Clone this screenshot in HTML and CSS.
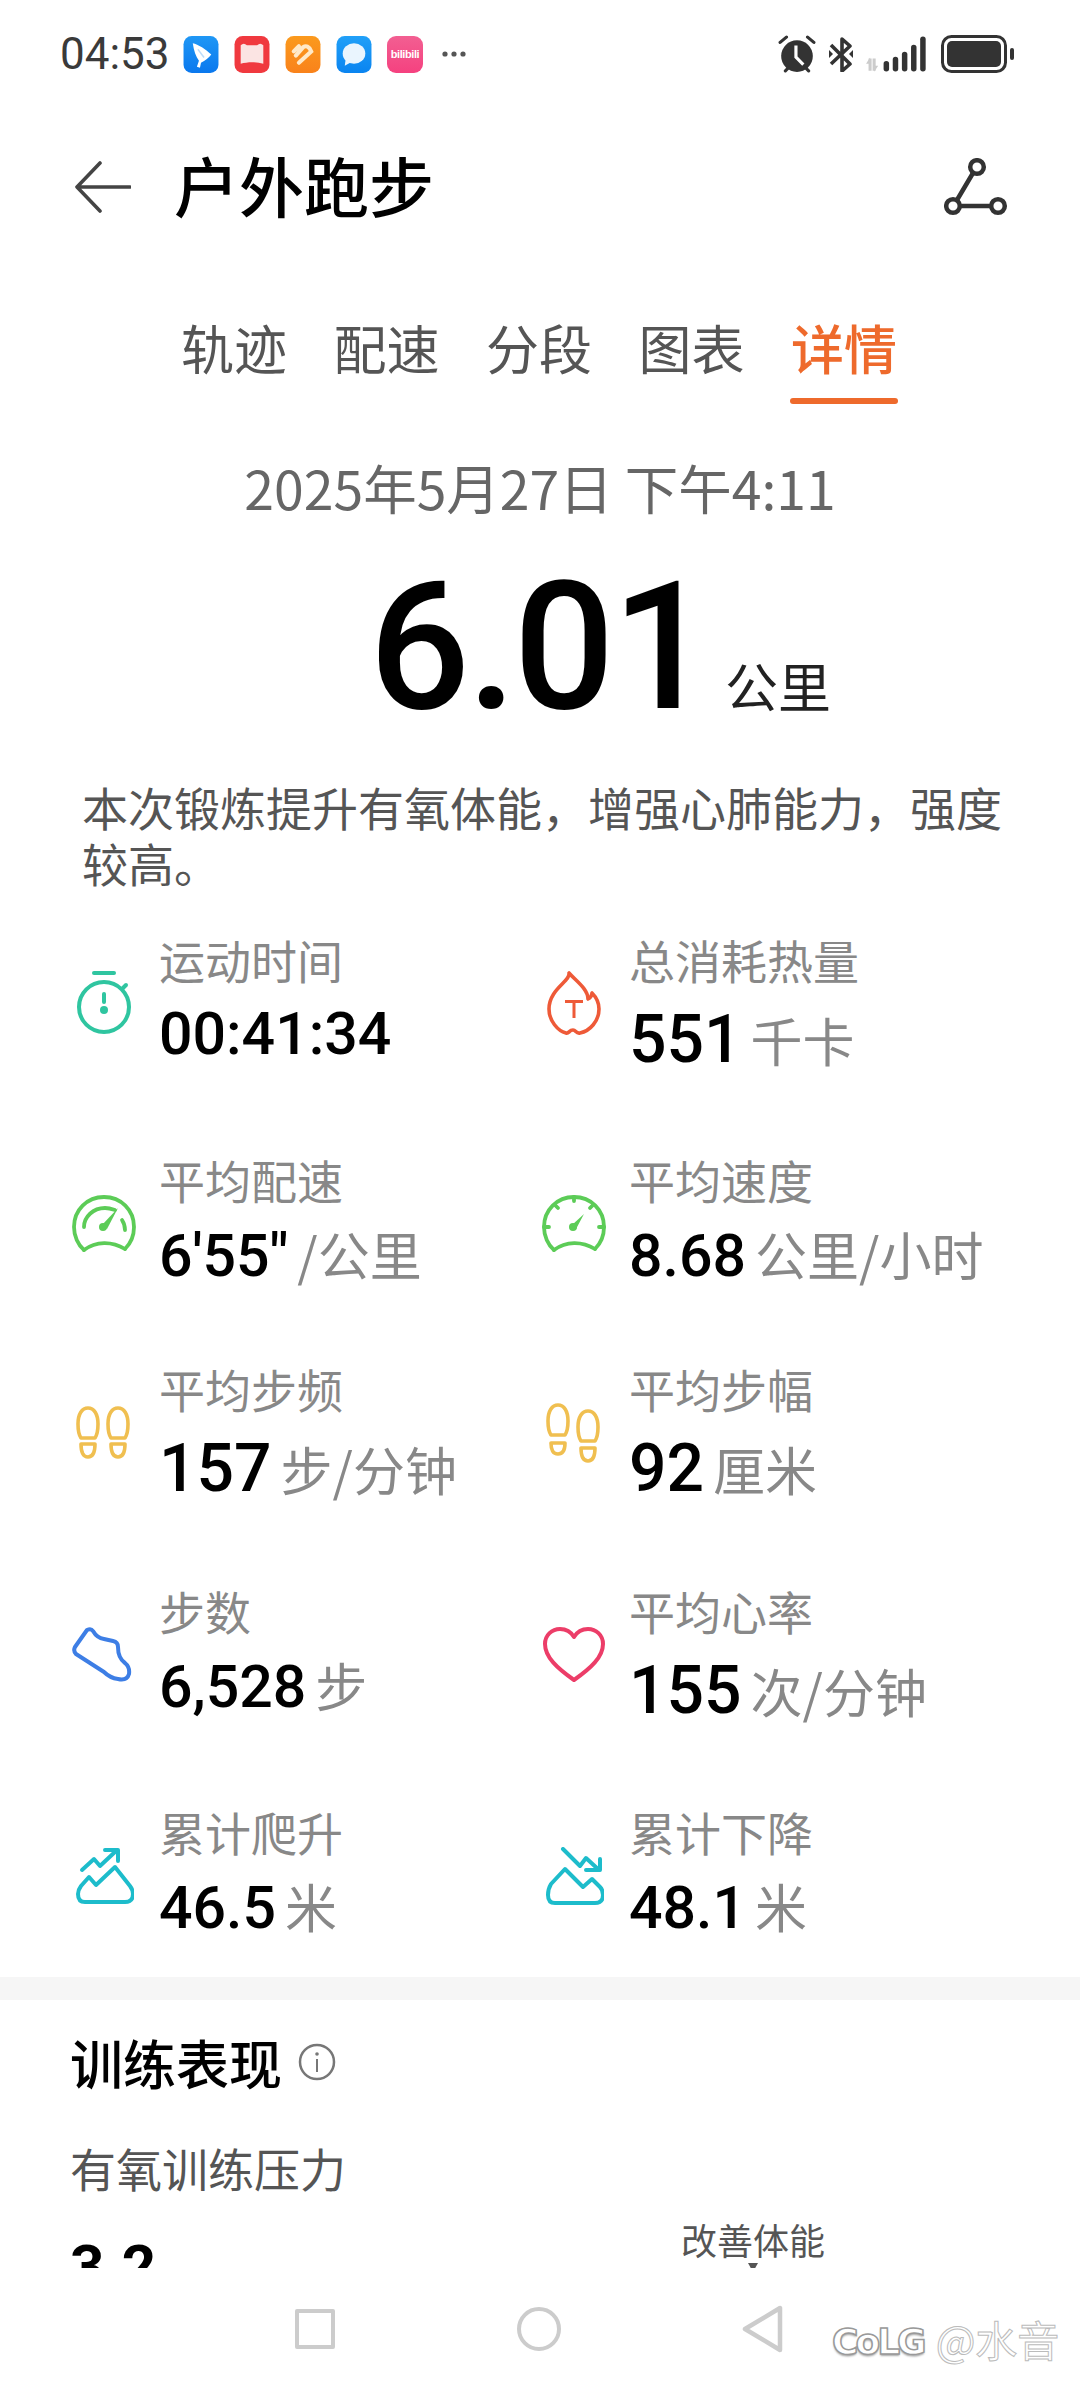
FILE: index.html
```html
<!DOCTYPE html>
<html lang="zh-CN">
<head>
<meta charset="utf-8">
<title>户外跑步</title>
<link rel="stylesheet" href="styles.css">
</head>
<body>
<div class="screen">
  <div class="status">
    <span class="time">04:53</span>
    <div class="apps">
      <svg class="app" viewBox="0 0 34 36"><defs><linearGradient id="g1" x1="0" y1="0" x2="0" y2="1"><stop offset="0" stop-color="#1f97f5"/><stop offset="1" stop-color="#0a78ee"/></linearGradient></defs><rect width="34" height="36" rx="8" fill="url(#g1)"/><path d="M9 7c5 1 13 6 18 11-2 3-6 6-10 8l-1 5-3-1 2-6c-3-4-5-10-6-17z" fill="#fff"/><path d="M14 13l6 8" stroke="#bcdcfa" stroke-width="1.500"/></svg>
      <svg class="app" viewBox="0 0 34 36"><rect width="34" height="36" rx="8" fill="#f0393f"/><path d="M6 9c2-2 4-2 6 0h10c2-2 4-2 6 0v18c-7-2-15-2-22 0z" fill="#fbe4e3"/></svg>
      <svg class="app" viewBox="0 0 34 36"><defs><linearGradient id="g2" x1="0" y1="0" x2="0" y2="1"><stop offset="0" stop-color="#fb9a1d"/><stop offset="1" stop-color="#f9821b"/></linearGradient></defs><rect width="34" height="36" rx="8" fill="url(#g2)"/><path d="M8 15l5-5M13 26l12-11c-2-5-5-6-8-4l-7 8" fill="none" stroke="#ffe9c8" stroke-width="4" stroke-linecap="round"/></svg>
      <svg class="app" viewBox="0 0 34 36"><defs><linearGradient id="g3" x1="0" y1="0" x2="0" y2="1"><stop offset="0" stop-color="#21a0f8"/><stop offset="1" stop-color="#0a84f0"/></linearGradient></defs><rect width="34" height="36" rx="8" fill="url(#g3)"/><ellipse cx="17" cy="17" rx="11" ry="10" fill="#eaf5fe"/><path d="M9 22l-1 7 7-4z" fill="#eaf5fe"/></svg>
      <div class="bili"><span>bilibili</span></div>
    </div>
    <svg class="more" viewBox="0 0 26 8"><circle cx="4" cy="4" r="2.6"/><circle cx="13" cy="4" r="2.6"/><circle cx="22" cy="4" r="2.6"/></svg>
    <div class="sys">
      <svg class="alarm" viewBox="0 0 36 36"><circle cx="18" cy="20" r="15" fill="#333"/><path d="M2 7l6-5M34 7l-6-5M7 34l3-3M29 34l-3-3" stroke="#333" stroke-width="3" stroke-linecap="round" fill="none"/><path d="M17 10v11l7 7" stroke="#fff" stroke-width="3" fill="none"/></svg>
      <svg class="bt" viewBox="0 0 26 36"><path d="M3 9l19 19-8 7V3l8 7-19 18" fill="none" stroke="#333" stroke-width="3.6" stroke-linejoin="round"/><path d="M1 14l4 4-4 4zM25 14l-4 4 4 4z" fill="#333"/></svg>
      <svg class="signal" viewBox="0 0 62 36"><path d="M5 34V22M9 34V22" stroke="#ccc" stroke-width="3" fill="none"/><path d="M1 27l4-6v6zM13 29l-4 6v-6z" fill="#ccc"/><g stroke="#333" stroke-linecap="round" fill="none"><path d="M21 27v5" stroke-width="5.4"/><path d="M30 23v9" stroke-width="5.4"/><path d="M39 18v14" stroke-width="5.4"/><path d="M48 11v21" stroke-width="5.4"/><path d="M57 3v29" stroke-width="5.4"/></g></svg>
      <svg class="battery" viewBox="0 0 74 38"><rect x="1.5" y="1.5" width="63" height="35" rx="9" fill="none" stroke="#333" stroke-width="3"/><rect x="6" y="6" width="54" height="26" rx="5" fill="#333"/><rect x="69" y="13" width="4" height="12" rx="2" fill="#333"/></svg>
    </div>
  </div>

  <header class="head">
    <svg class="back" viewBox="0 0 56 52"><path d="M25 2L2 26l23 24M3 26h52" fill="none" stroke="#444" stroke-width="3.6" stroke-linecap="round" stroke-linejoin="round"/></svg>
    <h1 class="title">户外跑步</h1>
    <svg class="share" viewBox="0 0 64 58"><g fill="none" stroke="#333" stroke-width="4.5"><circle cx="33" cy="9" r="6.8"/><circle cx="9" cy="48" r="6.8"/><circle cx="54" cy="48" r="6.8"/><path d="M29 15L13 42M16 48h31"/></g></svg>
  </header>

  <nav class="tabs">
    <span class="tab">轨迹</span>
    <span class="tab">配速</span>
    <span class="tab">分段</span>
    <span class="tab">图表</span>
    <span class="tab on">详情</span>
  </nav>

  <div class="date">2025年5月27日 下午4:11</div>
  <div class="dist"><span class="dist-n">6.01</span><span class="dist-u">公里</span></div>
  <p class="desc">本次锻炼提升有氧体能，增强心肺能力，强度较高。</p>

  <div class="grid">
    <div class="cell">
      <div class="ic"><svg width="56" height="66" viewBox="0 0 56 66"><g fill="none" stroke="#2fc5a0" stroke-width="4" stroke-linecap="round"><path d="M18 2h20"/><circle cx="28" cy="36" r="25"/><path d="M47 17l3-3"/><path d="M28 23v8"/></g><circle cx="28" cy="39" r="4" fill="#2fc5a0"/></svg></div>
      <div class="tx"><div class="lb">运动时间</div><div class="val"><b>00:41:34</b></div></div>
    </div>
    <div class="cell">
      <div class="ic"><svg width="56" height="66" viewBox="0 0 56 66"><g fill="none" stroke="#ee5a38" stroke-width="3.6" stroke-linejoin="round" stroke-linecap="round"><path d="M23 2c2 8-20 16-20 36 0 12 9 22 17 24 3 1 3-3 7-3 3 0 3 4 7 3 10-2 19-12 19-24 0-8-3-12-7-16 0 4-2 5-4 6 0-10-12-18-19-26z"/></g><path d="M19 29h18v3h-7.5v15h-3V32H19z" fill="#ee5a38"/></svg></div>
      <div class="tx"><div class="lb">总消耗热量</div><div class="val up"><b class="lg">551</b><i>千卡</i></div></div>
    </div>
    <div class="cell">
      <div class="ic shift"><svg width="64" height="58" viewBox="0 0 64 58"><g fill="none" stroke="#5ccc57" stroke-width="3.8" stroke-linecap="round"><path d="M12 55C6 50 2 41 2 32 2 15 15 2 32 2s30 13 30 30c0 8-3 16-9 22"/><path d="M12 55c12-9 28-9 41-1"/><path d="M12 32C12 22 21 13 33 13c4 0 7 1 10 2"/><path d="M50 25c2 3 3 6 3 10"/></g><circle cx="31" cy="32" r="4" fill="#5ccc57"/><path d="M30 30l16-17-11 21z" fill="#5ccc57"/></svg></div>
      <div class="tx"><div class="lb">平均配速</div><div class="val"><b>6'55"</b><i>/公里</i></div></div>
    </div>
    <div class="cell">
      <div class="ic shift"><svg width="64" height="58" viewBox="0 0 64 58"><g fill="none" stroke="#5ccc57" stroke-width="3.8" stroke-linecap="round"><path d="M12 55C6 50 2 41 2 32 2 15 15 2 32 2s30 13 30 30c0 8-3 16-9 22"/><path d="M12 55c12-9 28-9 41-1"/><path d="M32 2v4M13 10l3 3M51 10l-3 3M2 32h5M62 32h-5"/></g><circle cx="31" cy="32" r="4" fill="#5ccc57"/><path d="M30 30l12-11-8 15z" fill="#5ccc57"/></svg></div>
      <div class="tx"><div class="lb">平均速度</div><div class="val"><b>8.68</b><i>公里/小时</i></div></div>
    </div>
    <div class="cell">
      <div class="ic"><svg width="54" height="53" viewBox="0 0 54 53"><g fill="none" stroke="#f0bf50" stroke-width="3.6" stroke-linejoin="round"><path d="M12 2C6 2 2 8 2 18c0 6 1 11 3 14h14c2-3 3-8 3-14C22 8 18 2 12 2z"/><path d="M5 38h14c0 8-2 13-7 13S5 46 5 38z"/><path d="M42 2c-6 0-10 6-10 16 0 6 1 11 3 14h14c2-3 3-8 3-14 0-10-4-16-10-16z"/><path d="M35 38h14c0 8-2 13-7 13s-7-5-7-13z"/></g></svg></div>
      <div class="tx"><div class="lb">平均步频</div><div class="val up"><b class="lg">157</b><i>步/分钟</i></div></div>
    </div>
    <div class="cell">
      <div class="ic"><svg width="54" height="60" viewBox="0 0 54 60"><g fill="none" stroke="#f0bf50" stroke-width="3.6" stroke-linejoin="round"><path d="M12 2C6 2 2 8 2 18c0 6 1 11 3 14h14c2-3 3-8 3-14C22 8 18 2 12 2z"/><path d="M5 40h14c0 7-2 11-7 11S5 47 5 40z"/><path d="M42 8c-6 0-10 6-10 16 0 6 1 11 3 14h14c2-3 3-8 3-14 0-10-4-16-10-16z"/><path d="M35 45h14c0 8-2 13-7 13s-7-5-7-13z"/></g></svg></div>
      <div class="tx"><div class="lb">平均步幅</div><div class="val up"><b class="lg">92</b><i>厘米</i></div></div>
    </div>
    <div class="cell">
      <div class="ic shift"><svg width="60" height="56" viewBox="0 0 60 56"><path d="M3 20L15 3Q19 1 21 4Q25 11 32 12L41 14Q46 15 46 20Q46 31 53 36Q58 40 57 47Q55 54 46 52Q38 51 32 45L4 27Q1 24 3 20z" fill="none" stroke="#3d7ee5" stroke-width="4" stroke-linejoin="round"/></svg></div>
      <div class="tx"><div class="lb">步数</div><div class="val"><b>6,528</b><i>步</i></div></div>
    </div>
    <div class="cell">
      <div class="ic shift"><svg width="64" height="56" viewBox="0 0 64 56"><path d="M32 53C15 41 3 30 3 17 3 8 10 2 18 2c6 0 11 3 14 8 3-5 8-8 14-8 8 0 15 6 15 15 0 13-12 24-29 36z" fill="none" stroke="#ec3d68" stroke-width="4" stroke-linejoin="round"/></svg></div>
      <div class="tx"><div class="lb">平均心率</div><div class="val up"><b class="lg">155</b><i>次/分钟</i></div></div>
    </div>
    <div class="cell">
      <div class="ic"><svg width="58" height="58" viewBox="0 0 58 58"><g fill="none" stroke="#1dbccb" stroke-width="4" stroke-linecap="round" stroke-linejoin="round"><path d="M6 23l12-11 6 7L40 4"/><path d="M29 3h13v11"/><path d="M13 30L20 38 39 20 54 39Q57 43 57 47 57 55 49 55H9Q2 55 2 47 2 43 5 39z"/></g></svg></div>
      <div class="tx"><div class="lb">累计爬升</div><div class="val"><b>46.5</b><i>米</i></div></div>
    </div>
    <div class="cell">
      <div class="ic"><svg width="58" height="58" viewBox="0 0 58 58"><g fill="none" stroke="#1dbccb" stroke-width="4" stroke-linecap="round" stroke-linejoin="round"><path d="M17 2l17 17 6-8 13 12"/><path d="M40 23h14V12"/><path d="M19 22L37 40 46 32 54 40Q57 43 57 48 57 56 49 56H9Q2 56 2 48 2 42 5 37z"/></g></svg></div>
      <div class="tx"><div class="lb">累计下降</div><div class="val"><b>48.1</b><i>米</i></div></div>
    </div>
  </div>

  <div class="band"></div>

  <section class="perf">
    <div class="perf-h"><h2>训练表现</h2><svg class="info" viewBox="0 0 38 38"><circle cx="19" cy="19" r="17" fill="none" stroke="#777" stroke-width="2.5"/><circle cx="19" cy="11" r="1.800" fill="#777"/><path d="M19 16v13" stroke="#777" stroke-width="2"/></svg></div>
    <div class="perf-s">有氧训练压力</div>
    <div class="perf-row">
      <span class="big">3.2</span>
      <div class="hint"><span>改善体能</span><em></em></div>
    </div>
  </section>

  <div class="navbar">
    <span class="nv-sq"></span>
    <span class="nv-ci"></span>
    <svg class="nv-tr" viewBox="0 0 42 48"><path d="M3 24L38 3v42z" fill="none" stroke="#ccc" stroke-width="4.500" stroke-linejoin="round"/></svg>
  </div>

  <div class="mark"><span class="mk-l">CoLG</span><span class="mk-r">@水音</span></div>
</div>
</body>
</html>
```
FILE: styles.css
```css
* { box-sizing: border-box; margin: 0; padding: 0; }
html, body { background: #fff; }
body { width: 1080px; height: 2387px; overflow: hidden; font-family: "Noto Sans CJK SC", "Noto Sans", sans-serif; }
.screen { position: relative; width: 1080px; height: 2387px; overflow: hidden; display: flex; flex-direction: column; }

.status { height: 108px; flex: none; display: flex; align-items: center; padding-left: 60px; }
.time { font: 400 44px/1 Roboto, sans-serif; color: #3a3a3a; width: 123px; }
.apps { display: flex; gap: 15px; }
.app { width: 36px; height: 37px; display: block; }
.bili { width: 36px; height: 37px; border-radius: 9px; background: linear-gradient(#f25f92, #f5417f); display: flex; align-items: center; justify-content: center; overflow: hidden; }
.bili span { font: 700 11px/1 "Liberation Sans", sans-serif; color: #fff; letter-spacing: -.4px; }
.more { width: 26px; height: 8px; fill: #555; margin-left: 18px; }
.sys { display: flex; align-items: center; margin-left: auto; padding-right: 65px; }
.alarm { width: 38px; height: 38px; display: block; }
.bt { width: 26px; height: 36px; display: block; margin-left: 12px; }
.signal { width: 63px; height: 37px; display: block; margin-left: 11px; }
.battery { width: 74px; height: 38px; display: block; margin-left: 13px; }

.head { height: 158px; flex: none; display: flex; align-items: center; padding: 0 72px 0 75px; }
.back { width: 56px; height: 52px; display: block; }
.title { font-size: 65px; font-weight: 500; line-height: 1; color: #000; margin-left: 43px; margin-bottom: 5px; }
.share { width: 64px; height: 58px; display: block; margin-left: auto; }

.tabs { height: 173px; flex: none; display: flex; padding: 0 0 0 181px; gap: 46.5px; }
.tab { font-size: 53px; line-height: 78px; height: 132px; color: #555; width: 106px; white-space: nowrap; padding-top: 42px; position: relative; }
.tab.on { color: #ee6a2c; font-weight: 500; }
.tab.on::after { content: ""; position: absolute; left: -1px; right: -1px; bottom: -6px; height: 6px; background: #ee6a2c; border-radius: 3px; }

.date { margin-top: 16px; text-align: center; font: 400 53.5px/64px "Noto Sans CJK SC", sans-serif; color: #666; }
.dist { height: 170px; flex: none; display: flex; align-items: baseline; padding-left: 369px; margin-top: 43px; }
.dist-n { font: 500 178px/170px Roboto, sans-serif; color: #000; letter-spacing: -3px; }
.dist-u { font-size: 53px; line-height: 1; color: #222; margin-left: 15px; }
.desc { padding: 0 70px 0 82px; font-size: 46px; line-height: 56px; color: #555; margin-top: 46px; }

.grid { display: grid; grid-template-columns: 470px 1fr; grid-template-rows: 220px 209px 222px 221px 166px; margin-top: 35px; }
.cell { display: flex; align-items: flex-start; }
.ic { width: 159px; height: 157px; padding-left: 76px; display: flex; align-items: center; flex: none; }
.ic.shift { padding-left: 72px; }
.ic svg { display: block; }
.lb { font-size: 46px; line-height: 69px; color: #888; }
.val { display: flex; align-items: baseline; white-space: nowrap; margin-top: 2px; }
.val.up { margin-top: 8px; }
.val b { font: 500 59px/76px Roboto, sans-serif; color: #000; }
.val b.lg { font-size: 66px; }
.val i { font-style: normal; font-size: 52px; line-height: 76px; color: #888; margin-left: 9px; }

.band { height: 23px; flex: none; background: #f6f6f6; margin-top: 14px; }
.perf { padding: 0 0 0 70px; height: 268px; flex: none; overflow: hidden; }
.perf-h { display: flex; align-items: center; height: 80px; margin-top: 22px; }
.perf-h h2 { font-size: 53px; font-weight: 500; line-height: 80px; color: #000; }
.info { width: 38px; height: 38px; margin-left: 16px; display: block; }
.perf-s { font-size: 46px; line-height: 60px; color: #555; margin-top: 35px; }
.perf-row { display: flex; justify-content: space-between; align-items: flex-start; }
.big { font: 700 60px/58px Roboto, sans-serif; color: #000; display: block; margin-top: 41px; }
.hint { margin-right: 255px; display: flex; flex-direction: column; align-items: center; margin-top: 18px; }
.hint span { font-size: 36px; line-height: 48px; color: #555; }
.hint em { width: 0; height: 0; border: 5px solid transparent; border-top: 9px solid #555; border-bottom: 0; }

.navbar { position: absolute; left: 0; right: 0; bottom: 0; height: 116px; background: #fff; display: flex; align-items: center; padding-left: 295px; }
.nv-sq { width: 40px; height: 40px; border: 4px solid #ccc; border-radius: 2px; }
.nv-ci { width: 44px; height: 44px; border: 4px solid #ccc; border-radius: 50%; margin-left: 182px; }
.nv-tr { width: 42px; height: 48px; display: block; margin-left: 181px; }
.mark { position: absolute; left: 832px; top: 2318px; display: flex; align-items: center; gap: 12px; }
.mk-l { font: 700 36px/1 "DejaVu Sans", sans-serif; color: #fff; -webkit-text-stroke: 1.5px #999; letter-spacing: -3px; text-shadow: 0 2px 2px #aaa; margin-top: 6px; }
.mk-r { font-size: 42px; line-height: 1; color: #fff; -webkit-text-stroke: 1px #bbb; }
```
